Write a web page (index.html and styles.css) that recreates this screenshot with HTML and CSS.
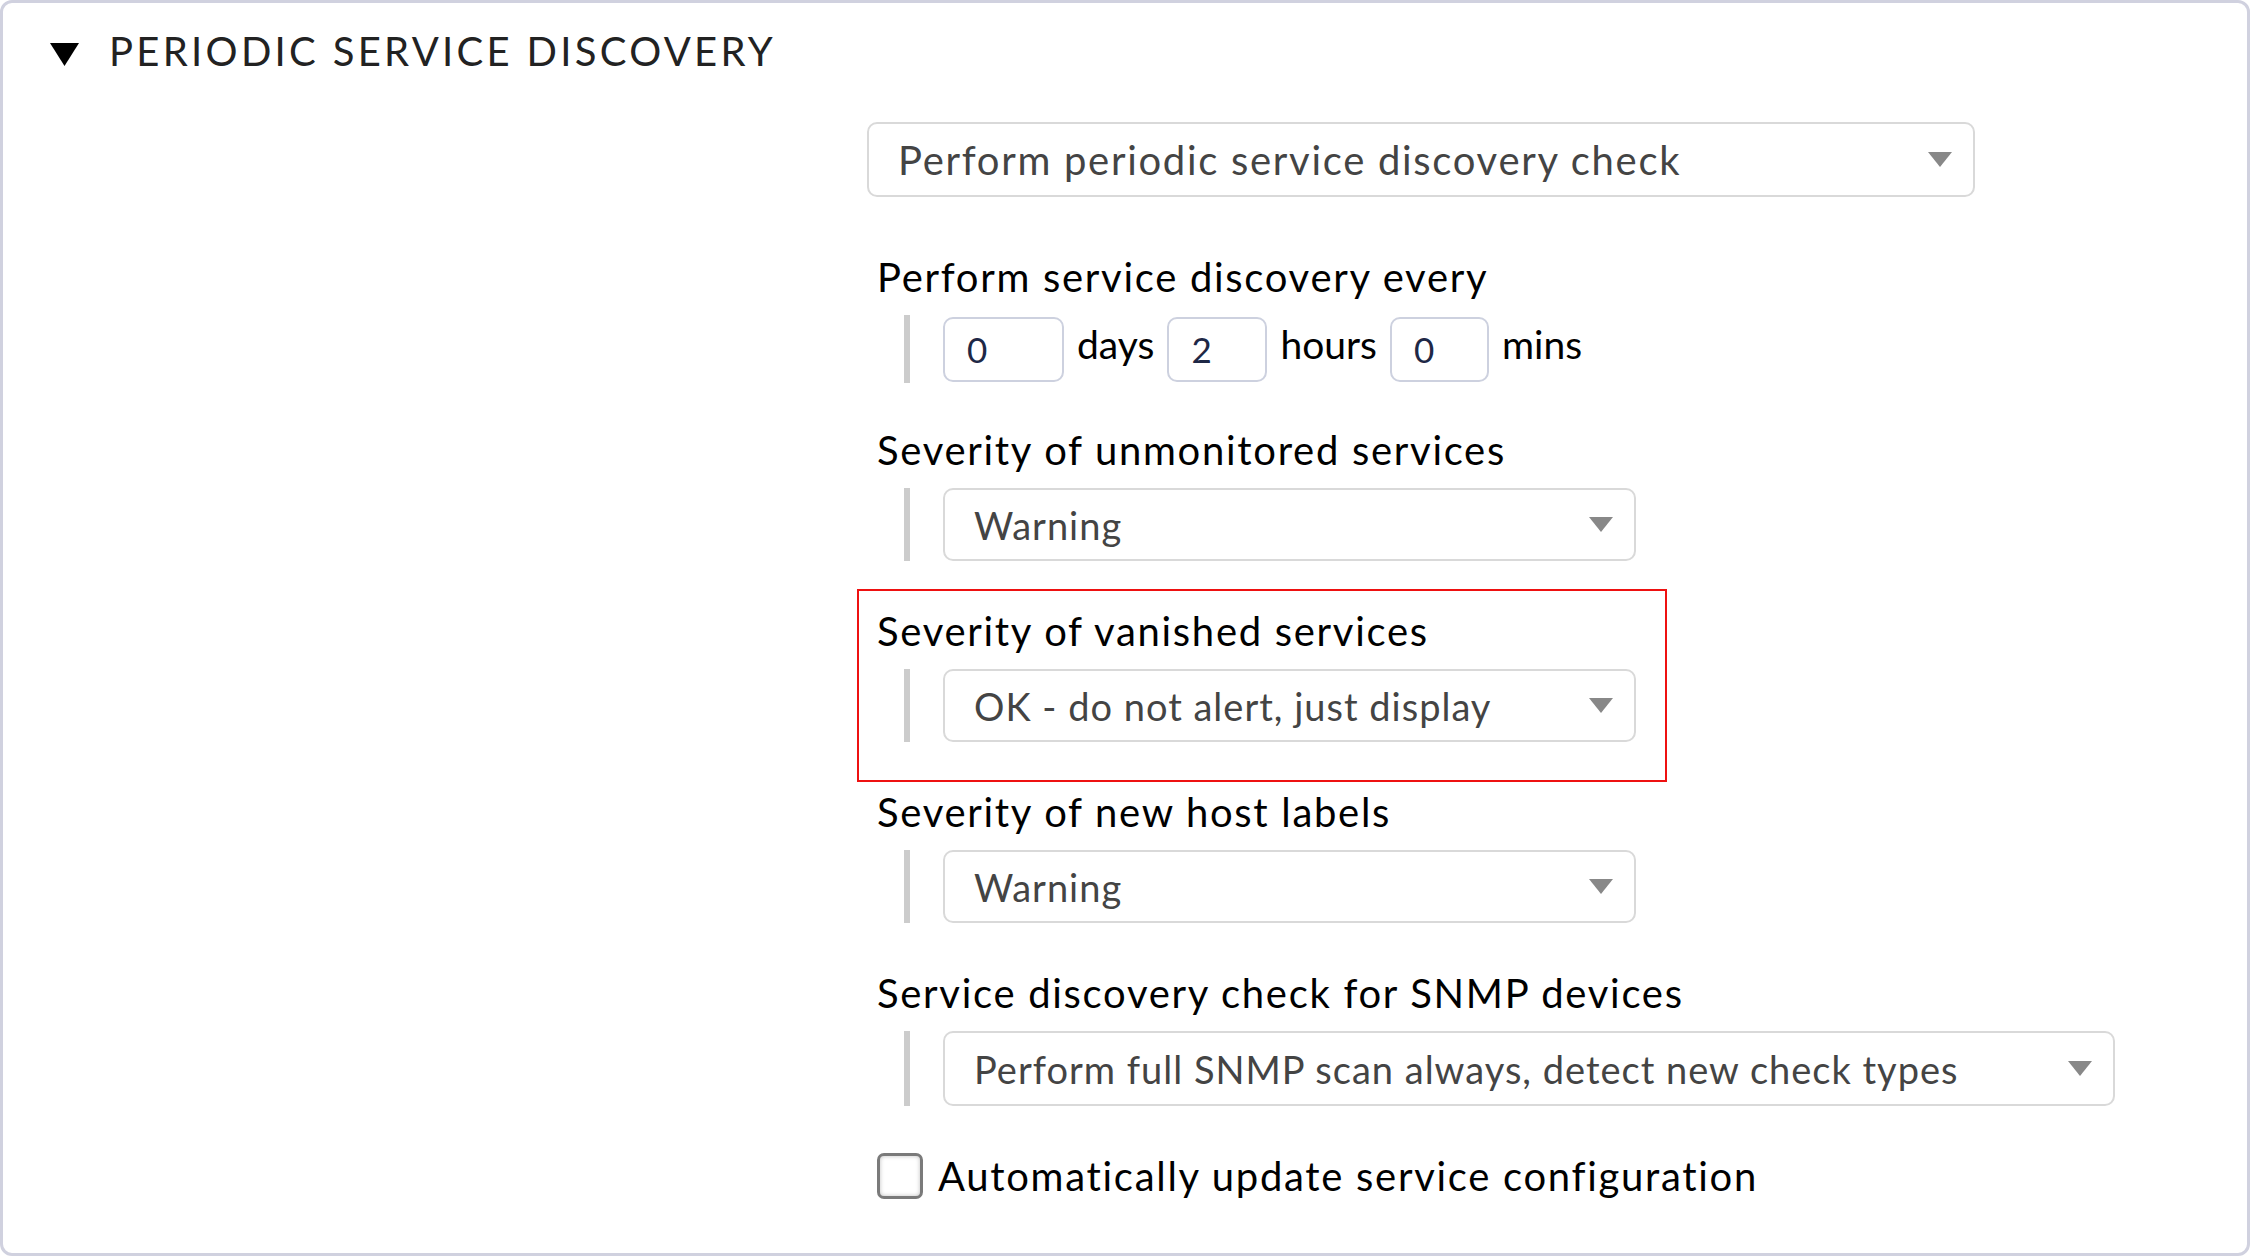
FILE: index.html
```html
<!DOCTYPE html>
<html lang="en">
<head>
<meta charset="utf-8">
<title>Periodic service discovery</title>
<link rel="stylesheet" href="styles.css">
</head>
<body>
<div class="panel">
  <div class="header">
    <svg class="fold" width="29" height="23" viewBox="0 0 29 23"><polygon points="0,0 29,0 14.5,23" fill="#000"/></svg>
    <span class="title">Periodic service discovery</span>
  </div>
  <div class="fields">
    <div class="select select-main">
      <span class="select-text">Perform periodic service discovery check</span>
      <span class="arrow"></span>
    </div>

    <div class="section section-time">
      <div class="label">Perform service discovery every</div>
      <div class="row row-time">
        <div class="num num-days">0</div><span class="unit">days</span>
        <div class="num num-hours">2</div><span class="unit">hours</span>
        <div class="num num-mins">0</div><span class="unit">mins</span>
      </div>
    </div>

    <div class="section">
      <div class="label">Severity of unmonitored services</div>
      <div class="row">
        <div class="select select-mid"><span class="select-text">Warning</span><span class="arrow"></span></div>
      </div>
    </div>

    <div class="section highlighted">
      <div class="label">Severity of vanished services</div>
      <div class="row">
        <div class="select select-mid"><span class="select-text">OK - do not alert, just display</span><span class="arrow"></span></div>
      </div>
    </div>

    <div class="section">
      <div class="label">Severity of new host labels</div>
      <div class="row">
        <div class="select select-mid"><span class="select-text">Warning</span><span class="arrow"></span></div>
      </div>
    </div>

    <div class="section section-snmp">
      <div class="label">Service discovery check for SNMP devices</div>
      <div class="row">
        <div class="select select-wide"><span class="select-text">Perform full SNMP scan always, detect new check types</span><span class="arrow"></span></div>
      </div>
    </div>

    <div class="check-row">
      <span class="checkbox"></span>
      <span class="check-label">Automatically update service configuration</span>
    </div>
  </div>
</div>
</body>
</html>
```

FILE: styles.css
```css
html, body {
  margin: 0;
  padding: 0;
  background: #ffffff;
}

body {
  font-family: Lato, "Open Sans", sans-serif;
  color: #000;
}

.panel {
  box-sizing: border-box;
  width: 2250px;
  height: 1256px;
  border: 3px solid #d0d1df;
  border-radius: 12px;
  padding-top: 23px;
}

.header {
  display: flex;
  align-items: center;
  height: 50px;
  padding-left: 47px;
}

.fold {
  display: block;
  margin-top: 7px;
}

.title {
  margin-left: 30px;
  font-size: 40px;
  letter-spacing: 3.3px;
  text-transform: uppercase;
  color: #222;
  white-space: nowrap;
}

.fields {
  padding-left: 864px;
  padding-top: 46px;
}

.select {
  box-sizing: border-box;
  display: flex;
  align-items: center;
  justify-content: space-between;
  height: 73px;
  border: 2px solid #d9d9d9;
  border-radius: 10px;
  padding-left: 29px;
  padding-right: 21px;
  color: #444;
  font-size: 38px;
  letter-spacing: 1px;
  white-space: nowrap;
}

.select-main {
  width: 1108px;
  height: 75px;
  margin-bottom: 58px;
  font-size: 40px;
  letter-spacing: 1.7px;
}

.select-mid {
  width: 693px;
}

.select-wide {
  width: 1172px;
  height: 75px;
}

.arrow {
  flex: none;
  width: 0;
  height: 0;
  border-left: 12.5px solid transparent;
  border-right: 12.5px solid transparent;
  border-top: 15px solid #888;
}

.section {
  margin-left: 10px;
  margin-bottom: 48px;
}

.section-time {
  margin-bottom: 45px;
}

.section-snmp {
  margin-bottom: 47px;
}

.label {
  height: 44px;
  line-height: 44px;
  font-size: 40px;
  letter-spacing: 1.7px;
  margin-bottom: 16px;
  white-space: nowrap;
}

.row {
  display: flex;
  align-items: center;
  margin-left: 27px;
  border-left: 6px solid #cccccc;
  padding-left: 33px;
}

.row-time {
  height: 68px;
  gap: 13px;
}

.num {
  box-sizing: border-box;
  height: 65px;
  border: 2px solid #cdd1df;
  border-radius: 10px;
  padding-left: 22px;
  font-size: 35px;
  line-height: 61px;
  color: #1e2846;
}

.num-days { width: 121px; }
.num-hours { width: 100px; }
.num-mins { width: 99px; }

.unit {
  font-size: 39px;
  letter-spacing: 0;
  line-height: 44px;
  margin-top: -10px;
}

.highlighted {
  position: relative;
}

.highlighted::after {
  content: "";
  position: absolute;
  left: -20px;
  top: -20px;
  width: 810px;
  height: 193px;
  box-sizing: border-box;
  border: 2px solid #ee1111;
  pointer-events: none;
}

.check-row {
  display: flex;
  align-items: center;
  margin-left: 10px;
  height: 46px;
}

.checkbox {
  flex: none;
  box-sizing: border-box;
  width: 46px;
  height: 46px;
  border: 3px solid #7a7a7a;
  border-radius: 7px;
  background: #fff;
  box-shadow: inset 0 0 4px rgba(0, 0, 0, 0.25);
}

.check-label {
  margin-left: 15px;
  font-size: 40px;
  letter-spacing: 1.7px;
  line-height: 44px;
  white-space: nowrap;
}
```
